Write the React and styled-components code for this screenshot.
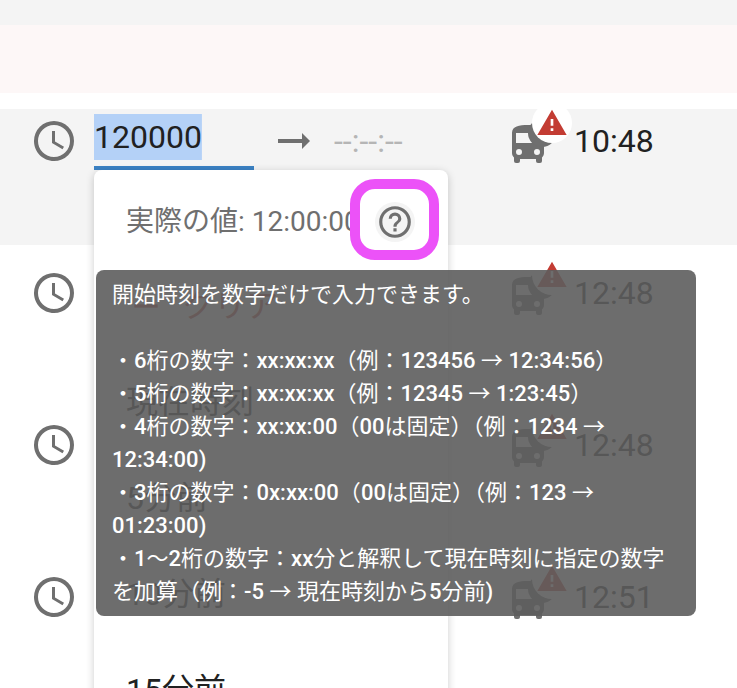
import React, { useEffect, useRef } from 'react';
import styled, { createGlobalStyle } from 'styled-components';

const GlobalStyle = createGlobalStyle`
  * {
    box-sizing: border-box;
  }
  body {
    margin: 0;
    background: #fff;
    color: #212121;
    font-family: Roboto, 'Noto Sans CJK JP', sans-serif;
    font-size: 32px;
  }
  button,
  input {
    font: inherit;
    color: inherit;
  }
`;

const Page = styled.main`
  height: 100vh;
  overflow: hidden;
`;

const Band = styled.div`
  height: ${({ $height }) => $height}px;
  background: ${({ $color }) => $color};
`;

const Row = styled.section`
  display: grid;
  grid-template-columns: 48px 160px 48px 158px 48px 1fr;
  column-gap: 16px;
  align-items: start;
  height: 136px;
  margin-top: 16px;
  padding: 0 30px;
  background: ${({ $active }) => ($active ? '#f4f4f4' : '#fff')};
`;

const Cell = styled.div`
  position: relative;
  grid-column: ${({ $column }) => $column};
  height: 48px;
  margin-top: 8px;
  line-height: 48px;
  white-space: nowrap;
`;

const Icon = styled.svg`
  display: block;
  flex: none;
  width: ${({ $size }) => $size}px;
  height: ${({ $size }) => $size}px;
  fill: ${({ $color }) => $color || '#6f6f6f'};
`;

const Badge = styled.span`
  position: absolute;
  top: -14px;
  left: 24px;
  display: flex;
  align-items: center;
  justify-content: center;
  width: 40px;
  height: 40px;
  border-radius: 50%;
  background: #fff;
`;

const Time = styled.time`
  display: block;
  padding-left: 2px;
`;

const Field = styled.div`
  position: relative;
  padding-top: 5px;
`;

/* the gradient makes the selection as tall as the line, six digits wide */
const StartInput = styled.input`
  display: block;
  width: 100%;
  height: 56px;
  padding: 0 0 6px;
  border: 0;
  border-bottom: 4px solid #3b82c4;
  outline: none;
  background: linear-gradient(#b4d1f7, #b4d1f7) 0 0 / 6ch 46px no-repeat;
  line-height: 46px;
  &::selection {
    background: transparent;
    color: #212121;
  }
`;

const EndInput = styled.input`
  display: block;
  width: 100%;
  height: 48px;
  padding: 0;
  border: 0;
  outline: none;
  background: transparent;
  line-height: 48px;
  &::placeholder {
    color: #b5b5b5;
    opacity: 1;
  }
`;

const Menu = styled.div`
  position: absolute;
  z-index: 2;
  top: 100%;
  left: 0;
  width: 354px;
  padding: 16px 0;
  border-radius: 8px;
  background: #fff;
  box-shadow: 0 2px 8px rgba(0, 0, 0, 0.2);
`;

const MenuHead = styled.div`
  height: 72px;
  padding-left: 32px;
  color: #6f6f6f;
  font-size: 28px;
  line-height: 72px;
  white-space: nowrap;
`;

const MenuItem = styled.button`
  display: flex;
  align-items: center;
  gap: 16px;
  width: 100%;
  height: 96px;
  padding: 0 32px;
  border: 0;
  background: transparent;
  color: ${({ $danger }) => ($danger ? '#c33c33' : '#212121')};
  line-height: 48px;
  text-align: left;
`;

const Highlight = styled.div`
  position: absolute;
  top: 9px;
  right: 9px;
  display: flex;
  align-items: center;
  justify-content: center;
  width: 89px;
  height: 81px;
  padding-top: 4px;
  border: 10px solid #ec52f8;
  border-radius: 25px;
`;

const HelpButton = styled.button`
  display: flex;
  align-items: center;
  justify-content: center;
  width: 40px;
  height: 40px;
  padding: 0;
  border: 0;
  border-radius: 50%;
  background: #f4f4f4;
`;

const Tooltip = styled.div`
  position: absolute;
  z-index: 3;
  top: 100px;
  left: 2px;
  width: 600px;
  padding: 8px 16px;
  border-radius: 8px;
  background: rgba(93, 93, 93, 0.9);
  color: #fff;
  font-size: 22px;
  line-height: 33px;
  white-space: pre-line;
`;

const Latin = styled.span`
  font-weight: 500;
`;

const helpText = `開始時刻を数字だけで入力できます。

・6桁の数字：xx:xx:xx（例：123456 → 12:34:56）
・5桁の数字：xx:xx:xx（例：12345 → 1:23:45）
・4桁の数字：xx:xx:00（00は固定）（例：1234 → 12:34:00)
・3桁の数字：0x:xx:00（00は固定）（例：123 → 01:23:00)
・1〜2桁の数字：xx分と解釈して現在時刻に指定の数字を加算（例：-5 → 現在時刻から5分前)`;

const helpParts = helpText.split(/([-0-9x:)]+)/);

const presets = ['現在時刻', '5分前', '10分前', '15分前'];
const departures = ['12:48', '12:48', '12:51'];

const ClockIcon = () => (
  <Icon $size={48} viewBox="0 0 24 24" aria-hidden="true">
    <path d="M12 20a8 8 0 0 0 8-8 8 8 0 0 0-8-8 8 8 0 0 0-8 8 8 8 0 0 0 8 8m0-18a10 10 0 0 1 10 10 10 10 0 0 1-10 10C6.47 22 2 17.5 2 12A10 10 0 0 1 12 2m.5 5v5.25l4.5 2.67-.75 1.23L11 13V7h1.5z" />
  </Icon>
);

const ArrowIcon = () => (
  <Icon $size={48} viewBox="0 0 24 24" aria-hidden="true">
    <path d="M16 11H4v2h12v3l4-4-4-4v3z" />
  </Icon>
);

const HelpIcon = () => (
  <Icon $size={38} viewBox="0 0 24 24" aria-hidden="true">
    <path d="M11 18h2v-2h-2v2m1-16A10 10 0 0 0 2 12a10 10 0 0 0 10 10 10 10 0 0 0 10-10A10 10 0 0 0 12 2m0 18c-4.41 0-8-3.59-8-8s3.59-8 8-8 8 3.59 8 8-3.59 8-8 8m0-14a4 4 0 0 0-4 4h2a2 2 0 0 1 2-2 2 2 0 0 1 2 2c0 2-3 1.75-3 5h2c0-2.25 3-2.5 3-5a4 4 0 0 0-4-4z" />
  </Icon>
);

const BusIcon = () => (
  <Icon $size={48} viewBox="0 0 24 24" aria-hidden="true">
    <path
      fillRule="evenodd"
      d="M10 4h4v4h4v10c0 .88-.39 1.67-1 2.22V22a1 1 0 0 1-1 1h-1a1 1 0 0 1-1-1v-1H6v1a1 1 0 0 1-1 1H4a1 1 0 0 1-1-1v-1.78c-.61-.55-1-1.34-1-2.22V8c0-3.5 3.58-4 8-4zM4 8v5h10V8zM5.5 16a1.5 1.5 0 1 0 0 3 1.5 1.5 0 0 0 0-3zM14.5 16a1.5 1.5 0 1 0 0 3 1.5 1.5 0 0 0 0-3z"
    />
    <circle cx="17" cy="8" r="7" />
  </Icon>
);

const Departure = ({ time }) => (
  <>
    <Cell $column={5}>
      <BusIcon />
      <Badge>
        <Icon $size={32} $color="#c33c33" viewBox="0 0 24 24" aria-hidden="true">
          <path d="M13 14h-2V9h2m0 9h-2v-2h2M1 21h22L12 2 1 21z" />
        </Icon>
      </Badge>
    </Cell>
    <Cell $column={6}>
      <Time>{time}</Time>
    </Cell>
  </>
);

const TimeMenu = () => (
  <Menu>
    <MenuHead>実際の値: 12:00:00</MenuHead>
    <MenuItem type="button" $danger>
      <Icon $size={40} $color="#c33c33" viewBox="0 0 24 24" aria-hidden="true">
        <path d="M19 13H5v-2h14v2z" />
      </Icon>
      クリア
    </MenuItem>
    {presets.map((label) => (
      <MenuItem type="button" key={label}>
        {label}
      </MenuItem>
    ))}
    <Highlight>
      <HelpButton type="button" aria-describedby="start-help">
        <HelpIcon />
      </HelpButton>
    </Highlight>
    <Tooltip role="tooltip" id="start-help">
      {helpParts.map((part, i) => (i % 2 ? <Latin key={i}>{part}</Latin> : part))}
    </Tooltip>
  </Menu>
);

const App = () => {
  const startRef = useRef(null);

  useEffect(() => {
    startRef.current.focus();
    startRef.current.select();
  }, []);

  return (
    <Page>
      <GlobalStyle />
      <Band $height={25} $color="#f4f4f4" />
      <Band $height={68} $color="#fdf7f7" />
      <Row $active>
        <Cell as="label" $column={1} htmlFor="start-time">
          <ClockIcon />
        </Cell>
        <Field>
          <StartInput id="start-time" ref={startRef} defaultValue="120000" />
          <TimeMenu />
        </Field>
        <Cell as="label" $column={3} htmlFor="end-time">
          <ArrowIcon />
        </Cell>
        <Cell $column={4}>
          <EndInput id="end-time" placeholder="--:--:--" />
        </Cell>
        <Departure time="10:48" />
      </Row>
      {departures.map((time, i) => (
        <Row key={i}>
          <Cell $column={1}>
            <ClockIcon />
          </Cell>
          <Departure time={time} />
        </Row>
      ))}
    </Page>
  );
};

export default App;
